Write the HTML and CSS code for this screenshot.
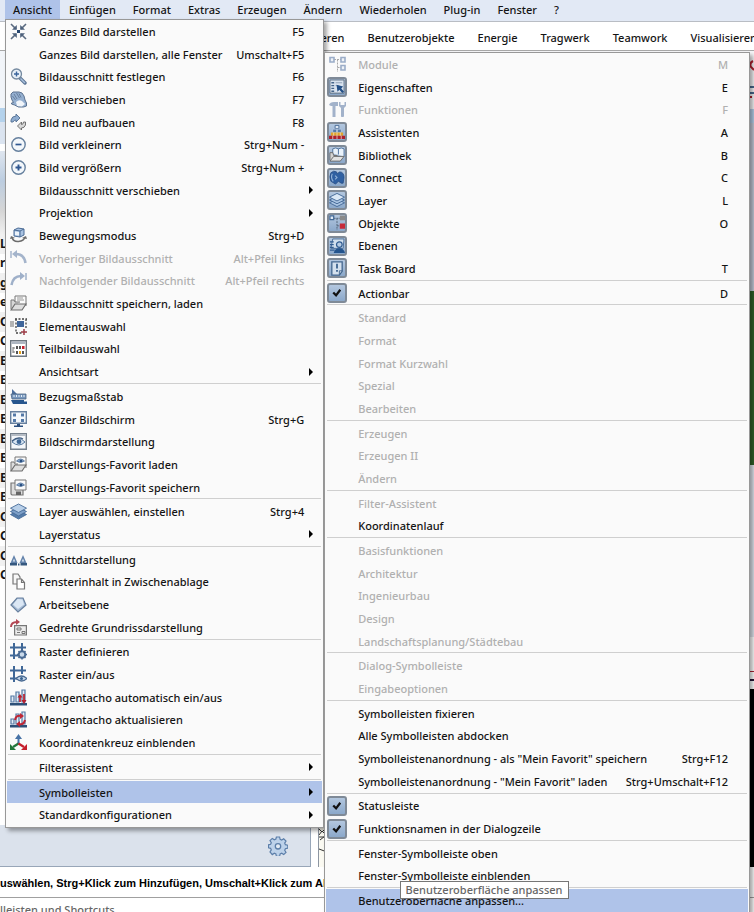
FILE: index.html
```
<!DOCTYPE html>
<html lang="de">
<head>
  <meta charset="UTF-8" />
  <meta name="viewport" content="width=device-width, initial-scale=1.0" />
  <title>Ansicht - Symbolleisten</title>
  <link rel="stylesheet" href="styles.css">
</head>
<body>
  <!-- icon set -->
  <svg class="sprite" aria-hidden="true">
    <symbol id="fit" viewBox="0 0 17 17"><path d="M1 1l5 5M16 1l-5 5M1 16l5-5M16 16l-5-5" stroke="#5b6b80" stroke-width="1.6"/><path d="M6.800 2v4.800H2zM10.200 2v4.800H15zM6.800 15v-4.800H2zM10.200 15v-4.800H15z" fill="#4d617c"/><path d="M7 7h3v3H7z" fill="#27466f"/></symbol>
    <symbol id="zoom" viewBox="0 0 17 17"><path d="M10 10l5 5" stroke="#5c7594" stroke-width="3.400" stroke-linecap="round"/><path d="M10.500 10.500l4.500 4.500" stroke="#a9c1de" stroke-width="1.400"/><circle cx="6.500" cy="6" r="5" fill="#e8f0f8" stroke="#74899f" stroke-width="1.300"/><path d="M4 6h5M6.500 3.500v5" stroke="#3b659c" stroke-width="1.400"/></symbol>
    <symbol id="hand" viewBox="0 0 17 17"><path d="M1 6V3l2-2 6 0 3 1 2 3 1 4 1.500 3v3l-3 1h-5l-4-2-3-1 0-1 2-.5L2 9z" fill="#94afd0" stroke="#5d7390" stroke-width="1"/><path d="M4 3l3 5M6.500 2l3 5M9 2.500l2 4M2.500 5l3 4" stroke="#5d7390" stroke-width=".8"/><path d="M6 11q3-3 6-1l3 3-3 2.500-5-.5z" fill="#f1f5fa"/></symbol>
    <symbol id="redraw" viewBox="0 0 17 17"><path d="M1 8V6q1-4 5-4V0l4 4-4 4V6q-2 0-3 2z" fill="#8eacd0" stroke="#546f92" stroke-width=".9"/><path d="M15.500 8v3q-1 3-4 3v2l-4-4 4-4v2.500q2 0 2-2.500z" fill="#d8d8d8" stroke="#666" stroke-width=".9"/></symbol>
    <symbol id="minus" viewBox="0 0 17 17"><circle cx="8.500" cy="8.500" r="6.700" fill="#f3f7fb" stroke="#66809e" stroke-width="1.400"/><path d="M5.500 8.500h6" stroke="#2f5791" stroke-width="1.700"/></symbol>
    <symbol id="plus" viewBox="0 0 17 17"><circle cx="8.500" cy="8.500" r="6.700" fill="#f3f7fb" stroke="#66809e" stroke-width="1.400"/><path d="M5.500 8.500h6M8.500 5.500v6" stroke="#2f5791" stroke-width="1.900"/></symbol>
    <symbol id="orbit" viewBox="0 0 17 17"><path d="M4 3l4-2 6 1v6l-4 2-6-1z" fill="#a9c3e2" stroke="#4b6b95"/><path d="M4 3l6 1v6M10 4l4-2" fill="none" stroke="#4b6b95"/><path d="M5 4.500l4 .5v3.500L5 8z" fill="#eef4fa"/><path d="M2 10q1 5 6.500 4.500T15 10" fill="none" stroke="#6c6c6c" stroke-width="1.500"/><path d="M0 12l1-3 4 2zM17 12l-1-3-4 2z" fill="#6c6c6c"/></symbol>
    <symbol id="back" viewBox="0 0 17 17"><path d="M1 1v7" stroke="#a4b4cb" stroke-width="1.500"/><path d="M2 4l5-4v8z" fill="#a4b4cb"/><path d="M6 4q8 0 9.500 9" fill="none" stroke="#a4b4cb" stroke-width="2.600"/></symbol>
    <symbol id="forward" viewBox="0 0 17 17"><path d="M16 1v7" stroke="#9fb0c9" stroke-width="1.500"/><path d="M15 4l-5-4v8z" fill="#9fb0c9"/><path d="M11 4q-8 0-9.500 9" fill="none" stroke="#9fb0c9" stroke-width="2.600"/></symbol>
    <symbol id="folder" viewBox="0 0 17 17"><path d="M5 7V1h11v10" fill="#fafafa" stroke="#777"/><path d="M7 3h6M7 5h7" stroke="#999"/><path d="M1 14V5h3l1 2h5" fill="#d7d7d7" stroke="#777"/><path d="M1 15l4-6h11l-4 6z" fill="#dedede" stroke="#6c6c6c" stroke-width="1.200"/></symbol>
    <symbol id="element" viewBox="0 0 17 17"><path d="M0 3h4v6H0z" fill="#b4b4b4"/><path d="M6 1v14M16 1v9M5 1h12M6 15h6" fill="none" stroke="#444" stroke-width="1.300" stroke-dasharray="2 1.500"/><path d="M7 3h7v6H7z" fill="#40669b"/><path d="M14 11v6M11 14h6" stroke="#9d3c47" stroke-width="1.500"/></symbol>
    <symbol id="parts" viewBox="0 0 17 17"><path d="M.7.700h15.600v15.600H.7z" fill="#fff" stroke="#6e7780" stroke-width="1.400"/><path d="M1.500 1.500h14v2.500h-14z" fill="#aeb7c2"/><path d="M3 7v6M3 8h2M3 12h2" stroke="#777"/><path d="M6 6h2v3H6zM9 6h2v3H9zM6 11h2v3H6z" fill="#555"/><path d="M12 6h2.500v3H12z" fill="#c4202c"/><path d="M9 11h2v3H9z" fill="#e8a21a"/><path d="M12 11h2v3h-2z" fill="#555"/></symbol>
    <symbol id="ruler" viewBox="0 0 17 17"><path d="M2 6V1l5 5z" fill="#4d6f9c"/><path d="M1 6h15v5H2z" fill="#7797bd" stroke="#4d6584" stroke-width=".8"/><path d="M4 7v2M6.500 7v2M9 7v2M11.500 7v2M14 7v2" stroke="#e6eef6"/><path d="M1 12h13v1.500h3V16H3z" fill="#27568e"/></symbol>
    <symbol id="screen" viewBox="0 0 17 17"><path d="M.7.700h15.600v11.600H.7z" fill="#f4f8fc" stroke="#67809f" stroke-width="1.400"/><path d="M3 2.500h3v3H3zM11 2.500h3v3h-3zM3 8h3v3H3zM11 8h3v3h-3z" fill="#5378a7"/><path d="M7 13h3v1.500h3V16H4v-1.500h3z" fill="#2a4e7e"/></symbol>
    <symbol id="eye" viewBox="0 0 17 17"><path d="M.7.700h15.600v15.600H.7z" fill="#f5f7fa" stroke="#75808c" stroke-width="1.400"/><path d="M1 1h15v2H1z" fill="#b5bcc5"/><path d="M2 9q6-7 13 0-6 6-13 0z" fill="#d9e5f2" stroke="#56799f"/><circle cx="9" cy="8.700" r="2.400" fill="#3f6796"/><path d="M2 8q6-5 11-2" fill="none" stroke="#3f5c80" stroke-width="1.200"/></symbol>
    <symbol id="favload" viewBox="0 0 17 17"><path d="M5 7V1h11v11" fill="#fafafa" stroke="#777"/><path d="M6.500 5q4-4 8 0-4 3-8 0z" fill="#8aa8ca" stroke="#4b6d98" stroke-width=".8"/><circle cx="11" cy="5" r="1.300" fill="#284f82"/><path d="M1 15V6h3l1 2h3" fill="#ddd" stroke="#777"/><path d="M1 15l4-6h11l-4 6z" fill="#dedede" stroke="#6c6c6c" stroke-width="1.200"/></symbol>
    <symbol id="favsave" viewBox="0 0 17 17"><path d="M1 4h12v12H2l-1-1z" fill="#ddd" stroke="#777" stroke-width="1.200"/><path d="M5 1h11v10H5z" fill="#fafafa" stroke="#777"/><path d="M6.500 6q4-4 8 0-4 3-8 0z" fill="#8aa8ca" stroke="#4b6d98" stroke-width=".8"/><circle cx="11" cy="6" r="1.300" fill="#284f82"/><path d="M6 12.500h5V16H6z" fill="#666"/></symbol>
    <symbol id="layers" viewBox="0 0 17 17"><g stroke="#466b98" stroke-width=".9"><path d="M.5 11.500l8-4 8 4-8 4.500z" fill="#557cab"/><path d="M.5 8.500l8-4 8 4-8 4.500z" fill="#7d9fc8"/><path d="M.5 5.200l8-4.200 8 4.200-8 4.300z" fill="#b9d0e9"/></g></symbol>
    <symbol id="section" viewBox="0 0 17 17"><path d="M.5 12L4 4l3.500 8zM9.500 12L13 4l3.500 8z" fill="#6383ab"/><path d="M2.800 10.500h2.400L4 7.500zM11.800 10.500h2.400L13 7.500z" fill="#d9e5f1"/><path d="M0 12h7v2.500H0zM8 12.500h1.500v2H8zM10.500 12h6.500v2.500h-6.500z" fill="#35587f"/></symbol>
    <symbol id="copy" viewBox="0 0 17 17"><path d="M3 1h5l2 3v7H3z" fill="#f7f7f7" stroke="#777" stroke-width="1.200"/><path d="M7 6h4.500L14.500 9.500V16H7z" fill="#fff" stroke="#777" stroke-width="1.200"/><path d="M11.500 6v3.500h3" fill="none" stroke="#777" stroke-width="1.200"/></symbol>
    <symbol id="plane" viewBox="0 0 17 17"><path d="M1 9l6-7 6 0 3 7-8 7z" fill="#a8bdd6" stroke="#68809f" stroke-width="1.200"/><path d="M3 8.500L7.500 3l5 .5 1.500 5-6 4.500z" fill="#dbe7f4"/></symbol>
    <symbol id="rotated" viewBox="0 0 17 17"><path d="M1 8q0-5 6-5" fill="none" stroke="#b24652" stroke-width="2"/><path d="M6 0l4 3-4 3z" fill="#b24652"/><path d="M4.600 6.600h11.800v9.400H4.600z" fill="#ececec" stroke="#777" stroke-width="1.200"/><path d="M7 9h4v2H7zM7 13.500h3M12 12.500h3v2h-3z" fill="none" stroke="#777"/></symbol>
    <symbol id="gridset" viewBox="0 0 17 17"><path d="M4 0v16M12 0v8M0 4.500h16M0 12.500h8" stroke="#3f6797" stroke-width="2"/><circle cx="12" cy="11.500" r="3.300" fill="#c9d9ea" stroke="#496a93" stroke-width="2"/><path d="M12 6.500v2M12 14.500v2M7 11.500h2M15 11.500h2M8.500 8l1 1M15.500 8l-1 1M8.500 15l1-1M15.500 15l-1-1" stroke="#496a93" stroke-width="1.600"/></symbol>
    <symbol id="gridview" viewBox="0 0 17 17"><path d="M4 0v16M12 0v8M0 4.500h16M0 12.500h8" stroke="#3f6797" stroke-width="2"/><path d="M6 12.500q5-5 11 0-5 5-11 0z" fill="#c9d9ea" stroke="#496a93" stroke-width="1.200"/><circle cx="11.500" cy="12.500" r="1.500" fill="#36618f"/></symbol>
    <symbol id="bars" viewBox="0 0 17 17"><path d="M1 7h3v6H1zM6 3h3v10H6zM12 1h3v12h-3z" fill="#e5eef7" stroke="#5478a3" stroke-width="1.200"/><path d="M0 14h17v2.500H0z" fill="#2d5078"/><path d="M10 7v6M14 5v7" stroke="#b8202e" stroke-width="1.700"/><path d="M7.500 8.500h5L10 5zM11.500 11h5L14 15z" fill="#b8202e"/></symbol>
    <symbol id="barsync" viewBox="0 0 17 17"><path d="M1 8h3v5H1zM6 3h3v10H6zM12 1h3v12h-3z" fill="#e5eef7" stroke="#5478a3" stroke-width="1.200"/><path d="M0 14h17v2.500H0z" fill="#2d5078"/><path d="M5 9q1-5 6-4M15 9q-1 5-6 4" fill="none" stroke="#be2736" stroke-width="2"/><path d="M10 2l4 3-4 3zM10 10l-4 3 4 3z" fill="#be2736"/></symbol>
    <symbol id="axes" viewBox="0 0 17 17"><path d="M8.500 10V3" stroke="#4772a6" stroke-width="2"/><path d="M5 5l3.500-5L12 5z" fill="#4772a6"/><path d="M8.500 9.500L3 13" stroke="#21753b" stroke-width="2.200"/><path d="M0 10v6h6z" fill="#21753b"/><path d="M8.500 9.500L14 13" stroke="#c51e2b" stroke-width="2.200"/><path d="M17 10v6h-6z" fill="#c51e2b"/></symbol>
    <symbol id="tree" viewBox="0 0 17 17"><path d="M5 3.500h7M8.500 3.500V16M8.500 11.500H12" stroke="#a8a8a8" fill="none" stroke-dasharray="2 1"/><path d="M1 1.500h4V6H1zM12 1.500h4V6h-4zM12 9.500h4V14h-4z" fill="#eef2f7" stroke="#9badc8" stroke-width="1.600"/></symbol>
    <symbol id="props" viewBox="0 0 17 17"><path d="M1 1h15v14H1z" fill="#d9e3ef" stroke="#5e6e80"/><path d="M2.500 4h3M2.500 7h3M2.500 10h3M2.500 13h3" stroke="#456488" stroke-width="1.400"/><path d="M7 4h7M7 7h3" stroke="#8d9eb3"/><path d="M8 6l7 2-2 2 3 3.500-2 1.500-3-3.500-2 2z" fill="#234f86"/></symbol>
    <symbol id="tools" viewBox="0 0 17 17"><path d="M0 4q1-3 5-3h4v4H6.500v11h-3V5H2z" fill="#a2b2ca"/><path d="M10 1v4l2 2v8.500q1 1 3 0V7l2-2V1h-1.500v3h-4V1z" fill="#a2b2ca"/></symbol>
    <symbol id="wizard" viewBox="0 0 17 17"><path d="M6.500 1.500h4V5h-4z" fill="#dfe9f4" stroke="#4b6d97"/><path d="M4 5.500h4V9H4zM9 5.500h4V9H9z" fill="#557aa9" stroke="#dbe4ef" stroke-width=".5"/><path d="M2 9h13v3.500H2z" fill="#e0a32a"/><path d="M0 12.500h17V16H0z" fill="#ad1f2c"/><path d="M5 9v3.500M8.500 9v3.500M12 9v3.500M4 12.500V16M8.500 12.500V16M13 12.500V16" stroke="#f2ddd0" stroke-width=".8"/></symbol>
    <symbol id="library" viewBox="0 0 17 17"><path d="M4 7V2q3-2 6 0 3-2 6 0v8" fill="#eaf2fa" stroke="#4b6e99"/><path d="M10 2v6" stroke="#4b6e99"/><path d="M1 14V6h3l1 3h4" fill="#d4d4d4" stroke="#6a6a6a"/><path d="M1 15l4-5h11l-4 5z" fill="#e2e2e2" stroke="#6a6a6a"/></symbol>
    <symbol id="globe" viewBox="0 0 17 17"><path d="M2 3q3-3 6-1l1 2 2-2q5 0 5 6l-1 6h-2l-3-2-3 3-5-3Q0 7 2 3z" fill="#2f60a2" stroke="#244a80" stroke-width=".8"/><path d="M3.500 4q-2 4 1 8M6.500 6l2 2-2 2" fill="none" stroke="#8fb0d6" stroke-width="1.200"/></symbol>
    <symbol id="sheets" viewBox="0 0 17 17"><g stroke="#456a97" fill="#a9c4e2"><path d="M.5 11.500l8-4 8 4-8 4z"/><path d="M.5 8.500l8-4 8 4-8 4z"/><path d="M.5 5.500l8-4 8 4-8 4z" fill="#dae8f6"/></g></symbol>
    <symbol id="objects" viewBox="0 0 17 17"><path d="M5 3.500h7M8.500 3.500V16M8.500 11.500H12" stroke="#526275" fill="none" stroke-dasharray="2 1"/><path d="M1 1h4v4H1z" fill="#dfe9f4" stroke="#426895" stroke-width="1.300"/><path d="M11.500.500H17v5h-5.500z" fill="#898989"/><path d="M11.500 9H17v5.500h-5.500z" fill="#c62b3a"/></symbol>
    <symbol id="levels" viewBox="0 0 17 17"><path d="M4 1h12l-1 10H2z" fill="#d1dfed" stroke="#4a6d98"/><path d="M1 4h4M1 7h4M1 10h4M1 13h5" stroke="#315c91" stroke-width="1.300"/><circle cx="11" cy="7" r="3" fill="#b7cce3" stroke="#315c91" stroke-width="1.300"/><path d="M5 16q1-5 6-5t6 5z" fill="#24548d"/></symbol>
    <symbol id="task" viewBox="0 0 17 17"><path d="M3 2h11v10l-3 4H3z" fill="#d4e1ee" stroke="#44678f" stroke-width="1.400"/><path d="M14 11.500h-3V16" fill="none" stroke="#44678f"/><path d="M8.500 4v5M8.500 10.500v2" stroke="#315886" stroke-width="1.800"/></symbol>
    <symbol id="check" viewBox="0 0 17 17"><path d="M4.500 8l3 3L12 5" fill="none" stroke="#111" stroke-width="2.400"/></symbol>
    <symbol id="gear" viewBox="0 0 20 20"><path d="M8.400 1h3.200l.5 2.400 1.600.7 2-1.300 2.300 2.300-1.300 2 .7 1.600 2.400.5v3l-2.400.5-.7 1.600 1.300 2-2.300 2.300-2-1.300-1.600.7-.5 2.400H8.400l-.5-2.400-1.600-.7-2 1.300L2 15.900l1.300-2-.7-1.600L.5 11.800v-3l2.100-.5.700-1.600-1.300-2 2.300-2.300 2 1.300 1.600-.7z" fill="#bdd2ea" stroke="#5b7ea9" stroke-width="1.200"/><circle cx="10" cy="10.300" r="2.700" fill="#e3ebf4" stroke="#5b7ea9" stroke-width="1.300"/></symbol>
  </svg>

  <nav class="menubar">
    <button class="open">Ansicht</button>
    <button>Einfügen</button>
    <button>Format</button>
    <button>Extras</button>
    <button>Erzeugen</button>
    <button>Ändern</button>
    <button>Wiederholen</button>
    <button>Plug-in</button>
    <button>Fenster</button>
    <button>?</button>
  </nav>

  <nav class="tabs">
    <button>Visualisieren</button>
    <button>Teamwork</button>
    <button>Tragwerk</button>
    <button>Energie</button>
    <button>Benutzerobjekte</button>
    <button>Modellieren</button>
  </nav>

  <main class="workspace">
    <section class="palette">
      <div class="palette-head"></div>
      <ul class="palette-list">
        <li>L</li><li>r</li><li>g</li><li>e</li><li>O</li><li>C</li>
        <li>E</li><li>E</li><li>E</li><li>E</li><li>E</li><li>E</li><li>E</li><li>E</li>
        <li>C</li><li>C</li><li>C</li><li>C</li>
      </ul>
      <footer class="palette-foot">
        <button class="settings" aria-label="Einstellungen"><svg><use href="#gear"/></svg></button>
      </footer>
    </section>
    <section class="views">
      <div class="view-tools">
        <svg class="tool-marks" viewBox="0 0 6 50"><path d="M5 10q-4 2-2 6l3 3" fill="none" stroke="#b3202e" stroke-width="2"/><path d="M6 36H1v6h5" fill="none" stroke="#48698f" stroke-width="2"/><path d="M2 46h2" stroke="#b3202e" stroke-width="2"/></svg>
      </div>
      <div class="view-title"></div>
      <div class="sky"></div>
      <div class="meadow"></div>
      <div class="snow"></div>
      <div class="sheet"></div>
      <div class="plan">
        <svg class="hatch" viewBox="0 0 8 40"><path d="M0 2l3 3 3-3M0 8l3-4 4 4M0 10h7M1 13l5-4M0 22l8 3" fill="none" stroke="#333"/></svg>
      </div>
    </section>
  </main>

  <p class="prompt">uswählen, Strg+Klick zum Hinzufügen, Umschalt+Klick zum Abwählen</p>
  <p class="hint">lleisten und Shortcuts</p>

  <!-- Ansicht -->
  <menu class="menu menu-main">
    <li><button><svg><use href="#fit"/></svg><span>Ganzes Bild darstellen</span><kbd>F5</kbd></button></li>
    <li><button><span>Ganzes Bild darstellen, alle Fenster</span><kbd>Umschalt+F5</kbd></button></li>
    <li><button><svg><use href="#zoom"/></svg><span>Bildausschnitt festlegen</span><kbd>F6</kbd></button></li>
    <li><button><svg><use href="#hand"/></svg><span>Bild verschieben</span><kbd>F7</kbd></button></li>
    <li><button><svg><use href="#redraw"/></svg><span>Bild neu aufbauen</span><kbd>F8</kbd></button></li>
    <li><button><svg><use href="#minus"/></svg><span>Bild verkleinern</span><kbd>Strg+Num -</kbd></button></li>
    <li><button><svg><use href="#plus"/></svg><span>Bild vergrößern</span><kbd>Strg+Num +</kbd></button></li>
    <li><button class="sub"><span>Bildausschnitt verschieben</span></button></li>
    <li><button class="sub"><span>Projektion</span></button></li>
    <li><button><svg><use href="#orbit"/></svg><span>Bewegungsmodus</span><kbd>Strg+D</kbd></button></li>
    <li><button disabled><svg><use href="#back"/></svg><span>Vorheriger Bildausschnitt</span><kbd>Alt+Pfeil links</kbd></button></li>
    <li><button disabled><svg><use href="#forward"/></svg><span>Nachfolgender Bildausschnitt</span><kbd>Alt+Pfeil rechts</kbd></button></li>
    <li><button><svg><use href="#folder"/></svg><span>Bildausschnitt speichern, laden</span></button></li>
    <li><button><svg><use href="#element"/></svg><span>Elementauswahl</span></button></li>
    <li><button><svg><use href="#parts"/></svg><span>Teilbildauswahl</span></button></li>
    <li><button class="sub"><span>Ansichtsart</span></button></li>
    <li class="line"></li>
    <li><button><svg><use href="#ruler"/></svg><span>Bezugsmaßstab</span></button></li>
    <li><button><svg><use href="#screen"/></svg><span>Ganzer Bildschirm</span><kbd>Strg+G</kbd></button></li>
    <li><button><svg><use href="#eye"/></svg><span>Bildschirmdarstellung</span></button></li>
    <li><button><svg><use href="#favload"/></svg><span>Darstellungs-Favorit laden</span></button></li>
    <li><button><svg><use href="#favsave"/></svg><span>Darstellungs-Favorit speichern</span></button></li>
    <li class="line"></li>
    <li><button><svg><use href="#layers"/></svg><span>Layer auswählen, einstellen</span><kbd>Strg+4</kbd></button></li>
    <li><button class="sub"><span>Layerstatus</span></button></li>
    <li class="line"></li>
    <li><button><svg><use href="#section"/></svg><span>Schnittdarstellung</span></button></li>
    <li><button><svg><use href="#copy"/></svg><span>Fensterinhalt in Zwischenablage</span></button></li>
    <li><button><svg><use href="#plane"/></svg><span>Arbeitsebene</span></button></li>
    <li><button><svg><use href="#rotated"/></svg><span>Gedrehte Grundrissdarstellung</span></button></li>
    <li class="line"></li>
    <li><button><svg><use href="#gridset"/></svg><span>Raster definieren</span></button></li>
    <li><button><svg><use href="#gridview"/></svg><span>Raster ein/aus</span></button></li>
    <li><button><svg><use href="#bars"/></svg><span>Mengentacho automatisch ein/aus</span></button></li>
    <li><button><svg><use href="#barsync"/></svg><span>Mengentacho aktualisieren</span></button></li>
    <li><button><svg><use href="#axes"/></svg><span>Koordinatenkreuz einblenden</span></button></li>
    <li class="line"></li>
    <li><button class="sub"><span>Filterassistent</span></button></li>
    <li class="line"></li>
    <li><button class="sub active"><span>Symbolleisten</span></button></li>
    <li><button class="sub"><span>Standardkonfigurationen</span></button></li>
  </menu>

  <!-- Ansicht > Symbolleisten -->
  <menu class="menu menu-sub">
    <li><button disabled><svg><use href="#tree"/></svg><span>Module</span><kbd>M</kbd></button></li>
    <li><button class="on"><svg><use href="#props"/></svg><span>Eigenschaften</span><kbd>E</kbd></button></li>
    <li><button disabled><svg><use href="#tools"/></svg><span>Funktionen</span><kbd>F</kbd></button></li>
    <li><button class="on"><svg><use href="#wizard"/></svg><span>Assistenten</span><kbd>A</kbd></button></li>
    <li><button class="on"><svg><use href="#library"/></svg><span>Bibliothek</span><kbd>B</kbd></button></li>
    <li><button class="on"><svg><use href="#globe"/></svg><span>Connect</span><kbd>C</kbd></button></li>
    <li><button class="on"><svg><use href="#sheets"/></svg><span>Layer</span><kbd>L</kbd></button></li>
    <li><button class="on"><svg><use href="#objects"/></svg><span>Objekte</span><kbd>O</kbd></button></li>
    <li><button class="on"><svg><use href="#levels"/></svg><span>Ebenen</span></button></li>
    <li><button class="on"><svg><use href="#task"/></svg><span>Task Board</span><kbd>T</kbd></button></li>
    <li class="line"></li>
    <li><button class="on"><svg><use href="#check"/></svg><span>Actionbar</span><kbd>D</kbd></button></li>
    <li class="line"></li>
    <li><button disabled><span>Standard</span></button></li>
    <li><button disabled><span>Format</span></button></li>
    <li><button disabled><span>Format Kurzwahl</span></button></li>
    <li><button disabled><span>Spezial</span></button></li>
    <li><button disabled><span>Bearbeiten</span></button></li>
    <li class="line"></li>
    <li><button disabled><span>Erzeugen</span></button></li>
    <li><button disabled><span>Erzeugen II</span></button></li>
    <li><button disabled><span>Ändern</span></button></li>
    <li class="line"></li>
    <li><button disabled><span>Filter-Assistent</span></button></li>
    <li><button><span>Koordinatenlauf</span></button></li>
    <li class="line"></li>
    <li><button disabled><span>Basisfunktionen</span></button></li>
    <li><button disabled><span>Architektur</span></button></li>
    <li><button disabled><span>Ingenieurbau</span></button></li>
    <li><button disabled><span>Design</span></button></li>
    <li><button disabled><span>Landschaftsplanung/Städtebau</span></button></li>
    <li class="line"></li>
    <li><button disabled><span>Dialog-Symbolleiste</span></button></li>
    <li><button disabled><span>Eingabeoptionen</span></button></li>
    <li class="line"></li>
    <li><button><span>Symbolleisten fixieren</span></button></li>
    <li><button><span>Alle Symbolleisten abdocken</span></button></li>
    <li><button><span>Symbolleistenanordnung - als "Mein Favorit" speichern</span><kbd>Strg+F12</kbd></button></li>
    <li><button><span>Symbolleistenanordnung - "Mein Favorit" laden</span><kbd>Strg+Umschalt+F12</kbd></button></li>
    <li class="line"></li>
    <li><button class="on"><svg><use href="#check"/></svg><span>Statusleiste</span></button></li>
    <li><button class="on"><svg><use href="#check"/></svg><span>Funktionsnamen in der Dialogzeile</span></button></li>
    <li class="line"></li>
    <li><button><span>Fenster-Symbolleiste oben</span></button></li>
    <li><button><span>Fenster-Symbolleiste einblenden</span></button></li>
    <li class="line"></li>
    <li><button class="active"><span>Benutzeroberfläche anpassen...</span></button></li>
  </menu>

  <div class="tooltip" role="tooltip">Benutzeroberfläche anpassen</div>
</body>
</html>
```
FILE: styles.css
```
* {
  box-sizing: border-box;
}

body {
  margin: 0;
  height: 100vh;
  position: relative;
  display: flex;
  flex-direction: column;
  overflow: hidden;
  background: #fff;
  color: #141414;
  font-family: "Noto Sans", sans-serif;
  font-size: 11px;
  font-weight: 500;
}

button {
  margin: 0;
  padding: 0;
  border: 0;
  background: none;
  color: inherit;
  font: inherit;
}

.sprite {
  position: absolute;
  width: 0;
  height: 0;
}

.menubar {
  display: flex;
  flex: none;
  gap: 1px;
  height: 22px;
  padding-left: 5px;
  background: #e2e9f5;
  border-bottom: 1px solid #b9bdc4;
}

.menubar button {
  padding: 0 8px;
  height: 19px;
}

.menubar .open {
  background: #afc3e9;
}

.tabs {
  display: flex;
  flex: none;
  flex-direction: row-reverse;
  gap: 23px;
  height: 29px;
  margin-right: -3px;
  padding-top: 2px;
  border-bottom: 1px solid #a8a8a8;
}

.workspace {
  flex: 1;
  display: grid;
  grid-template-columns: 5fr 7fr;
  gap: 7px;
  min-height: 0;
  padding-bottom: 1px;
}

.palette {
  display: flex;
  flex-direction: column;
  border-right: 1px solid #98a6b8;
  border-bottom: 1px solid #98a6b8;
}

.palette-head {
  height: 183px;
  background: linear-gradient(#f2f5f9 57px, #b4d2ec 57px, #b4d2ec 71px, #dbe4f0 71px, #dbe4f0 93px, #fff 93px, #fff 100px, #dfe6ef 100px, #bccde0 130px, #d6d6d6 160px, #f0f0f0);
}

.palette-list {
  flex: 1;
  display: flex;
  flex-direction: column;
  margin: 0;
  padding: 0 0 240px;
  list-style: none;
  font-size: 12px;
  font-weight: bold;
}

.palette-list li {
  flex: 1;
  display: flex;
  align-items: center;
  min-height: 0;
  line-height: 16px;
}

.palette-list li:nth-child(odd) {
  background: #f1f1f1;
}

.palette-foot {
  display: flex;
  justify-content: flex-end;
  align-items: center;
  height: 41px;
  padding-right: 22px;
  background: #dbe2ec;
}

.settings svg {
  display: block;
  width: 20px;
  height: 20px;
}

.views {
  display: flex;
  flex-direction: column;
  border-left: 1px solid #8d96a2;
}

.view-tools {
  flex: 58;
  display: flex;
  justify-content: flex-end;
  background: #f6f6f8;
}

.tool-marks {
  width: 6px;
  height: 50px;
}

.view-title {
  flex: 14;
  background: #b4cde8;
}

.sky {
  flex: 168;
  background: #c3c9d8;
}

.meadow {
  flex: 174;
  background: #31602a;
}

.snow {
  flex: 172;
  background: #e0e5ee;
}

.sheet {
  flex: 52;
  background: linear-gradient(#fff 65%, #a23 65%, #a23 68%, #fff 68%, #fff 80%, #213 80%, #213 84%, #fff 84%);
}

.plan {
  flex: 178;
  display: flex;
  align-items: flex-end;
  background: linear-gradient(to right, #fbfaf2 30%, #000 30%);
}

.hatch {
  width: 8px;
  height: 40px;
}

.prompt,
.hint {
  flex: none;
  margin: 0;
  overflow: hidden;
  white-space: nowrap;
}

.prompt {
  height: 30px;
  border-bottom: 1px solid #a0a0a0;
  color: #000;
  font: bold 11px/30px "Liberation Sans", sans-serif;
}

.hint {
  height: 14px;
  padding-top: 4px;
  color: #666;
  line-height: 16px;
}

/* drop-down menus */
.menu {
  position: absolute;
  display: flex;
  flex-direction: column;
  margin: 0;
  padding: 0 0 1px;
  list-style: none;
  background: #fafafa;
  border: 1px solid #989898;
  box-shadow: 3px 3px 4px rgba(0, 0, 0, 0.35);
}

.menu-main {
  top: 19px;
  bottom: 84px;
  left: 5px;
  right: 57%;
}

.menu-sub {
  top: 52px;
  bottom: 0;
  left: 43%;
  right: 4px;
  padding-bottom: 0;
  border-bottom: 0;
}

.menu li {
  flex: 1;
  display: flex;
  min-height: 0;
  padding: 0 1px;
}

.menu .line {
  flex: none;
  height: 2px;
  margin: 0 2px;
  border-top: 1px solid #cfcfcf;
}

.menu button {
  flex: 1;
  display: grid;
  grid-template-columns: 20px 1fr auto;
  column-gap: 11px;
  align-items: center;
  padding: 0 18px 0 1px;
  text-align: left;
  white-space: nowrap;
}

.menu-sub button {
  padding-right: 20px;
}

.menu svg {
  grid-column: 1;
  justify-self: center;
  width: 17px;
  height: 17px;
}

.menu span {
  grid-column: 2;
}

.menu kbd {
  grid-column: 3;
  font: inherit;
}

.menu button:disabled {
  color: #b0b0b0;
}

.menu .active {
  background: #afc3e9;
}

.menu .sub {
  padding-right: 9px;
}

.menu .sub::after {
  content: "";
  grid-column: 3;
  border: 4px solid transparent;
  border-left-color: #000;
  border-right: 0;
}

.menu .on svg {
  width: 20px;
  height: 20px;
  border: 2px solid #7f8a97;
  border-radius: 3px;
  background: linear-gradient(#b3c7df, #8ba8ca);
}

.tooltip {
  position: absolute;
  bottom: 13px;
  left: 53%;
  padding: 0 5px;
  border: 1px solid #767676;
  background: #fff;
  color: #666;
  line-height: 16px;
}
```
